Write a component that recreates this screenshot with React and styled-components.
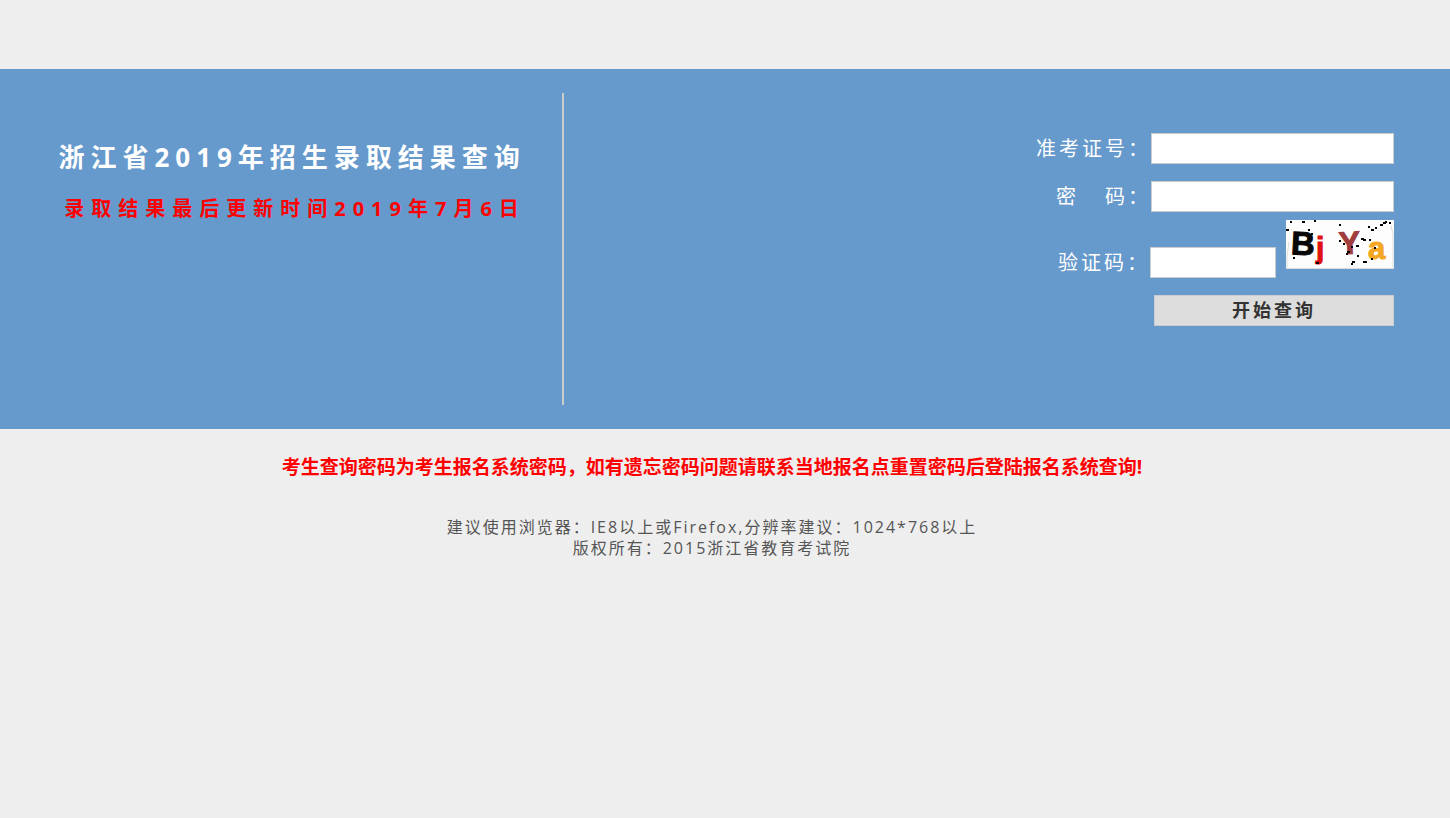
import React, { useState } from "react";
import styled, { createGlobalStyle } from "styled-components";

const GlobalStyle = createGlobalStyle`
  body {
    margin: 0;
    background-color: #eeeeee;
    color: #555555;
    font-family: "Open Sans", "Noto Sans CJK SC", sans-serif;
    font-size: 16px;
  }
`;

// banner ********

const Page = styled.div`
  padding-top: 69px;
`;

const Banner = styled.main`
  display: grid;
  grid-template-columns: 7fr 11fr;
  padding: 24px 0;
  min-height: 312px;
  background-color: #6699cc;
`;

const TitlePanel = styled.section`
  padding: 44px 36px 0 0;
  border-right: 2px solid #cccccc;
  text-align: right;
  white-space: nowrap;
`;

const Title = styled.h1`
  margin: 0;
  color: white;
  font-size: 26px;
  line-height: 40px;
  letter-spacing: 6px;
`;

const UpdateTime = styled.p`
  margin: 14px 0 0;
  color: red;
  font-size: 20px;
  font-weight: bold;
  line-height: 36px;
  letter-spacing: 7px;
`;

// query form ********

const QueryForm = styled.form`
  display: flex;
  flex-direction: column;
  align-items: flex-end;
  padding: 40px 56px 0 0;
`;

const Row = styled.div`
  display: flex;
  align-items: flex-end;
  margin-bottom: ${(props) => props.$gap || 17}px;
`;

const Label = styled.label`
  color: white;
  font-size: 20px;
  line-height: 31px;
  letter-spacing: 3px;
  white-space: pre;
`;

const Input = styled.input`
  box-sizing: border-box;
  width: ${(props) => (props.$short ? 126 : 243)}px;
  height: 31px;
  padding: 0 6px;
  border: 1px solid #cccccc;
  background-color: white;
  font-size: 18px;
`;

const Captcha = styled.svg`
  align-self: flex-start;
  width: 108px;
  height: 49px;
  margin: 0 0 9px 10px;
  background-color: #fdfdfd;
  font-family: "Liberation Sans", Arial, sans-serif;
  font-weight: bold;
`;

const SubmitButton = styled.button`
  width: 240px;
  height: 31px;
  padding: 0;
  border: 1px solid #cccccc;
  background-color: #dddddd;
  color: #333333;
  font-family: inherit;
  font-size: 18px;
  font-weight: bold;
  line-height: 29px;
  letter-spacing: 3px;
  cursor: pointer;
`;

// notes under the banner ********

const Footer = styled.footer`
  padding: 20px 26px 20px 0;
  text-align: center;
`;

const Warning = styled.p`
  margin: 0 0 32px;
  color: red;
  font-size: 19px;
  font-weight: bold;
  line-height: 36px;
`;

const Note = styled.p`
  margin: 0;
  line-height: 21px;
  letter-spacing: 2px;
`;

// ***************

const specks = [
  [4, 1, 2], [16, 1, 3], [28, 0, 2], [0, 9, 3], [22, 9, 2], [25, 13, 2],
  [7, 37, 2], [53, 4, 2], [53, 20, 2], [57, 23, 2], [61, 31, 3], [60, 33, 2],
  [66, 41, 3], [65, 43, 2], [71, 35, 2], [70, 25, 3], [75, 18, 3], [77, 19, 3],
  [77, 41, 4], [85, 38, 2], [82, 6, 2], [85, 9, 3], [89, 7, 2], [94, 4, 3],
  [97, 2, 3], [99, 1, 2], [103, 2, 2], [88, 27, 2], [83, 19, 2], [30, 42, 3],
  [65, 26, 2], [19, 22, 2],
];

const CaptchaImage = () => (
  <Captcha viewBox="0 0 108 49" role="img" aria-label="验证码">
    <path d="M1 49V36L3 22M107 49V14L105 6M0 48.500H108" fill="none" stroke="#dddddd" />
    <text x="5" y="35" fontSize="33" fill="#080808" stroke="#080808" transform="rotate(3 17 24)">
      B
    </text>
    <text x="30" y="38" fontSize="30" fill="#e01010" stroke="#e01010">
      j
    </text>
    <text x="53" y="34" fontSize="32" fill="#a03c3c" stroke="#a03c3c" transform="rotate(-3 64 24)">
      Y
    </text>
    <text x="82" y="39" fontSize="31" fill="#f5a623" stroke="#f5a623">
      a
    </text>
    {specks.map(([x, y, w]) => (
      <rect key={`${x}-${y}`} x={x} y={y} width={w} height="2" fill="#000000" />
    ))}
  </Captcha>
);

const App = () => {
  const [ticket, setTicket] = useState("");
  const [password, setPassword] = useState("");
  const [code, setCode] = useState("");

  return (
    <Page lang="zh-CN">
      <GlobalStyle />
      <Banner>
        <TitlePanel>
          <Title>浙江省2019年招生录取结果查询</Title>
          <UpdateTime>录取结果最后更新时间2019年7月6日</UpdateTime>
        </TitlePanel>
        <QueryForm onSubmit={(e) => e.preventDefault()}>
          <Row>
            <Label htmlFor="ticket">准考证号：</Label>
            <Input id="ticket" value={ticket} onChange={(e) => setTicket(e.target.value)} />
          </Row>
          <Row $gap={8}>
            <Label htmlFor="password">密{"\u2002\u2002"}码：</Label>
            <Input
              id="password"
              type="password"
              value={password}
              onChange={(e) => setPassword(e.target.value)}
            />
          </Row>
          <Row>
            <Label htmlFor="code">验证码：</Label>
            <Input id="code" $short value={code} onChange={(e) => setCode(e.target.value)} />
            <CaptchaImage />
          </Row>
          <SubmitButton type="submit">开始查询</SubmitButton>
        </QueryForm>
      </Banner>
      <Footer>
        <Warning>
          考生查询密码为考生报名系统密码，如有遗忘密码问题请联系当地报名点重置密码后登陆报名系统查询!
        </Warning>
        <Note>建议使用浏览器：IE8以上或Firefox,分辨率建议：1024*768以上</Note>
        <Note>版权所有：2015浙江省教育考试院</Note>
      </Footer>
    </Page>
  );
};

export default App;
